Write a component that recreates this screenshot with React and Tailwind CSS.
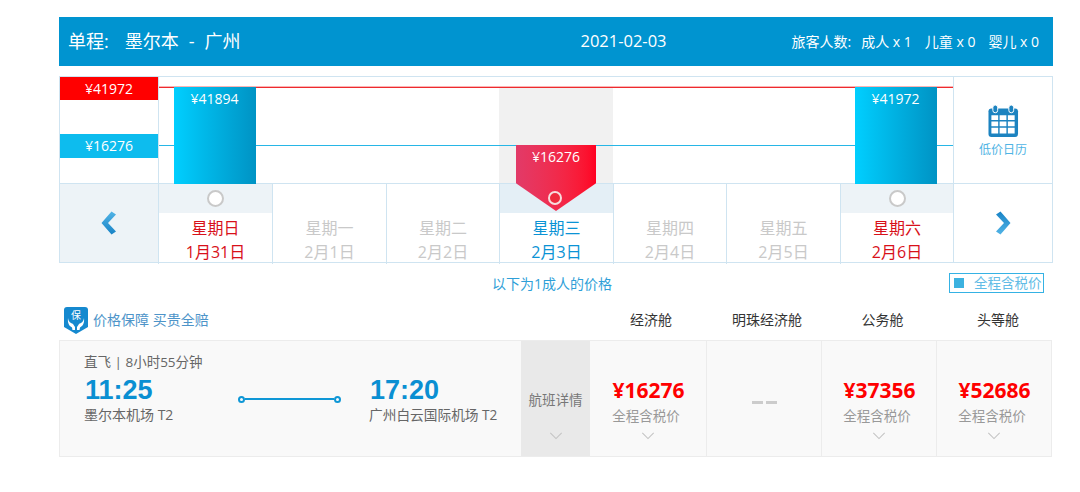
import React from 'react';

const days = [
    { week: '星期日', date: '1月31日', type: 'bar', price: '¥41894' },
    { week: '星期一', date: '2月1日' },
    { week: '星期二', date: '2月2日' },
    { week: '星期三', date: '2月3日', type: 'current', price: '¥16276' },
    { week: '星期四', date: '2月4日' },
    { week: '星期五', date: '2月5日' },
    { week: '星期六', date: '2月6日', type: 'bar', price: '¥41972' },
];

const fares = [
    { name: '经济舱', price: '¥16276', width: 'w-[116px]' },
    { name: '明珠经济舱', width: 'w-[116px]' },
    { name: '公务舱', price: '¥37356', width: 'w-[115px]' },
    { name: '头等舱', price: '¥52686', width: 'w-[116px]' },
];

const Chevron = ({ className }) => (
    <svg viewBox="0 0 16 9" className={className} fill="none" stroke="#c4c4c4" strokeWidth="1.2">
        <path d="M1.5 1 L8 7.5 L14.5 1" />
    </svg>
);

const Arrow = ({ flip }) => (
    <svg viewBox="0 0 16 24" className={`w-[16px] h-[24px] ${flip ? 'rotate-180' : ''}`}>
        <defs>
            <linearGradient id={flip ? 'arrowB' : 'arrowA'} x1="0" y1="0" x2="0" y2="1">
                <stop offset="0" stopColor="#52b4e6" />
                <stop offset="1" stopColor="#1883c6" />
            </linearGradient>
        </defs>
        <path d="M10.5 0.5 L15 3.5 L7 12 L15 20.5 L10.5 23.5 L0.5 12 Z" fill={`url(#${flip ? 'arrowB' : 'arrowA'})`} />
    </svg>
);

const CalendarIcon = () => (
    <svg viewBox="0 0 32 34" className="w-[31px] h-[34px]">
        <rect x="0.5" y="4" width="30.5" height="29.5" rx="3" fill="#1c83c0" />
        <rect x="5" y="0.5" width="5" height="8" rx="2.5" fill="#1c83c0" stroke="#fff" strokeWidth="1" />
        <rect x="21.5" y="0.5" width="5" height="8" rx="2.5" fill="#1c83c0" stroke="#fff" strokeWidth="1" />
        <path d="M3.5 11h7v5h-7zM12 11h7v5h-7zM20.5 11h7v5h-7zM3.5 17.5h7v5h-7zM12 17.5h7v5h-7zM20.5 17.5h7v5h-7zM3.5 24h7v6h-7zM12 24h7v6h-7zM20.5 24h7v6h-7z" fill="#fff" />
    </svg>
);

const ShieldIcon = () => (
    <svg viewBox="0 0 24 27" className="w-[24px] h-[27px] shrink-0 mt-[1px]">
        <path d="M3 0 H21 Q24 0 24 3 V20 L12 27 L0 20 V3 Q0 0 3 0 Z" fill="#1589cf" />
        <path d="M4 11 C4.5 15 7 16 9 17 L11 20 V23 H8.5 L8 20.5 C5 19 3.5 16 4 11 Z M20 11 C19.5 15 17 16 15 17 L13 20 V23 H15.5 L16 20.5 C19 19 20.5 16 20 11 Z" fill="#fff" />
        <text x="12" y="12" textAnchor="middle" fontSize="10" fill="#fff" fontFamily="'Noto Sans CJK SC', sans-serif">保</text>
    </svg>
);

const DayChartColumn = ({ day }) => {
    if (day.type === 'bar') {
        return (
            <div className="flex justify-center items-end pr-[2px]">
                <div className="relative z-10 w-[82px] h-[97px] -mb-px bg-gradient-to-r from-[#00cfff] to-[#0093c4] text-white text-[14px] text-center pt-[2px] leading-[20px]">
                    {day.price}
                </div>
            </div>
        );
    }
    if (day.type === 'current') {
        return (
            <div className="flex items-end">
                <div className="w-full h-[96px] bg-[#f1f1f1]" />
            </div>
        );
    }
    return <div />;
};

const DayCell = ({ day }) => {
    const tone =
        day.type === 'bar' ? 'text-[#d8111a]' : day.type === 'current' ? 'text-[#0b93d5]' : 'text-[#c9c9c9]';
    return (
        <div className="border-l border-[#cfe4f1] flex flex-col items-center">
            <div
                className={`w-full h-[29px] flex items-center justify-center ${
                    day.type === 'current' ? 'bg-[#e4eff6]' : day.type === 'bar' ? 'bg-[#edf3f7]' : ''
                }`}
            >
                {day.type === 'bar' && (
                    <div className="w-[17px] h-[17px] rounded-full border-2 border-[#c9c9c9] bg-white" />
                )}
            </div>
            <div className={`text-[16px] leading-[24px] mt-[3px] whitespace-nowrap ${tone}`}>{day.week}</div>
            <div className={`text-[16px] leading-[24px] whitespace-nowrap ${tone}`}>{day.date}</div>
        </div>
    );
};

const App = () => {
    return (
        <div
            className="w-[1080px] h-[492px] bg-white overflow-hidden pt-[17px] pl-[59px]"
            style={{ fontFamily: "'Open Sans', 'Noto Sans CJK SC', sans-serif" }}
        >
            <div className="w-[994px] h-[49px] bg-[#0094d0] text-white flex items-center">
                <div className="w-[400px] pl-[9px] text-[18px] flex whitespace-nowrap">
                    <span>单程:</span>
                    <span className="ml-[16px]">墨尔本</span>
                    <span className="ml-[10px]">-</span>
                    <span className="ml-[10px]">广州</span>
                </div>
                <div className="w-[329px] text-center text-[16.5px]">2021-02-03</div>
                <div className="flex-1 flex justify-end gap-[13px] pr-[14px] text-[14px] whitespace-nowrap">
                    <span>旅客人数:</span>
                    <span className="-ml-[3px]">成人 x 1</span>
                    <span>儿童 x 0</span>
                    <span>婴儿 x 0</span>
                </div>
            </div>

            <div className="relative w-[994px] h-[187px] mt-[10px] border border-[#cfe4f1]">
                <div className="flex h-[106px]">
                    <div className="w-[98px]">
                        <div className="h-[23px] bg-[#ff0000] text-white text-[14px] leading-[23px] text-center">¥41972</div>
                        <div className="h-[24px] mt-[34px] bg-[#0dbcee] text-white text-[14px] leading-[24px] text-center">¥16276</div>
                    </div>
                    <div className="relative w-[795px] border-l border-[#cfe4f1] grid grid-cols-[113px_114px_113px_114px_113px_114px_113px]">
                        {days.map((day) => (
                            <DayChartColumn key={day.date} day={day} />
                        ))}
                        {/* price lines run behind the bars */}
                        <div className="absolute left-0 right-0 top-[9px] h-[2px] bg-[#fbb4b4] border-b border-[#ee2a2e]" />
                        <div className="absolute left-0 right-0 top-[68px] border-t border-[#27b6e6]" />
                    </div>
                    <div className="flex-1 border-l border-[#cfe4f1] flex flex-col items-center pt-[27px]">
                        <CalendarIcon />
                        <div className="text-[12px] leading-[16px] mt-[4px] text-[#4fb4e4]">低价日历</div>
                    </div>
                </div>

                <div className="flex h-[79px] border-t border-[#cfe4f1]">
                    <div className="w-[98px] bg-[#edf3f7] flex items-center justify-center">
                        <Arrow />
                    </div>
                    <div className="w-[795px] grid grid-cols-[114px_114px_113px_114px_113px_114px_113px]">
                        {days.map((day) => (
                            <DayCell key={day.date} day={day} />
                        ))}
                    </div>
                    <div className="flex-1 border-l border-[#cfe4f1] flex items-center justify-center">
                        <Arrow flip />
                    </div>
                </div>

                <div className="absolute z-10 left-[456px] top-[68px] w-[80px] h-[66px] bg-gradient-to-r from-[#e23a68] to-[#ff0022] [clip-path:polygon(0_0,100%_0,100%_58%,50%_100%,0_58%)] text-white text-[14px] text-center pt-[2px] leading-[20px]">
                    ¥16276
                </div>
                <div className="absolute z-10 left-[488px] top-[114px] w-[14px] h-[14px] rounded-full border-2 border-[#f7dcdc] bg-[#ee2a3c]" />
            </div>

            <div className="relative w-[994px] h-[33px] flex items-center justify-center text-[14px] text-[#2f9fd8] pt-[7px] pr-[8px]">
                以下为1成人的价格
                <div className="absolute left-[890px] top-[10px] w-[95px] h-[20px] border border-[#35b2e4] flex items-center text-[13.5px] text-[#62bce6] pl-[4px]">
                    <span className="w-[10px] h-[10px] bg-[#3cb2e0] mr-[10px]" />
                    全程含税价
                </div>
            </div>

            <div className="flex items-center w-[994px] h-[44px] pt-[3px]">
                <div className="w-[534px] shrink-0 pl-[5px] flex items-center gap-[5px] text-[14px] text-[#4d94c9]">
                    <ShieldIcon />
                    价格保障 买贵全赔
                </div>
                {fares.map((fare) => (
                    <div key={fare.name} className={`${fare.width} shrink-0 text-center text-[14px] text-[#333333]`}>
                        {fare.name}
                    </div>
                ))}
            </div>

            <div className="flex w-[993px] h-[117px] bg-[#f9f9f9] border border-[#ececec]">
                <div className="w-[461px] pl-[24px] pt-[12px] flex">
                    <div className="w-[154px] shrink-0">
                        <div className="text-[13.5px] leading-[18px] text-[#666666] whitespace-nowrap">直飞 | 8小时55分钟</div>
                        <div className="text-[27px] leading-[30px] font-bold text-[#0a8fd2] mt-[4px] pl-[1px]" style={{ fontFamily: "'Liberation Sans', sans-serif" }}>11:25</div>
                        <div className="text-[14px] leading-[20px] text-[#666666]">墨尔本机场 T2</div>
                    </div>
                    <div className="w-[131px] shrink-0 flex items-center h-[92px]">
                        <span className="w-[7px] h-[7px] rounded-full border-2 border-[#0f97d6]" />
                        <span className="w-[89px] h-[2px] bg-[#0f97d6]" />
                        <span className="w-[7px] h-[7px] rounded-full border-2 border-[#0f97d6]" />
                    </div>
                    <div className="pt-[18px]">
                        <div className="text-[27px] leading-[30px] font-bold text-[#0a8fd2] mt-[4px] pl-[1px]" style={{ fontFamily: "'Liberation Sans', sans-serif" }}>17:20</div>
                        <div className="text-[13.7px] leading-[20px] text-[#666666] whitespace-nowrap">广州白云国际机场 T2</div>
                    </div>
                </div>
                <div className="w-[69px] bg-[#e9e9e9] flex flex-col items-center text-[13.5px] text-[#777777] pt-[50px]">
                    <div className="leading-[18px]">航班详情</div>
                    <Chevron className="w-[14px] h-[8px] mt-[23px]" />
                </div>
                {fares.map((fare, i) => (
                    <div
                        key={fare.name}
                        className={`${i === 0 ? 'w-[116px]' : 'w-[115px] border-l border-[#ececec]'} flex flex-col items-center pt-[35px]`}
                    >
                        {fare.price ? (
                            <>
                                <div className="text-[21px] leading-[28px] font-bold text-[#ff0000] pl-[1px]">{fare.price}</div>
                                <div className="text-[13.5px] leading-[20px] mt-[2px] text-[#999999] pr-[4px]">全程含税价</div>
                                <Chevron className="w-[14px] h-[8px] mt-[6px]" />
                            </>
                        ) : (
                            <div className="flex gap-[3px] mt-[25px]">
                                <span className="w-[11px] h-[3px] bg-[#cccccc]" />
                                <span className="w-[11px] h-[3px] bg-[#cccccc]" />
                            </div>
                        )}
                    </div>
                ))}
            </div>
        </div>
    );
};

export default App;
